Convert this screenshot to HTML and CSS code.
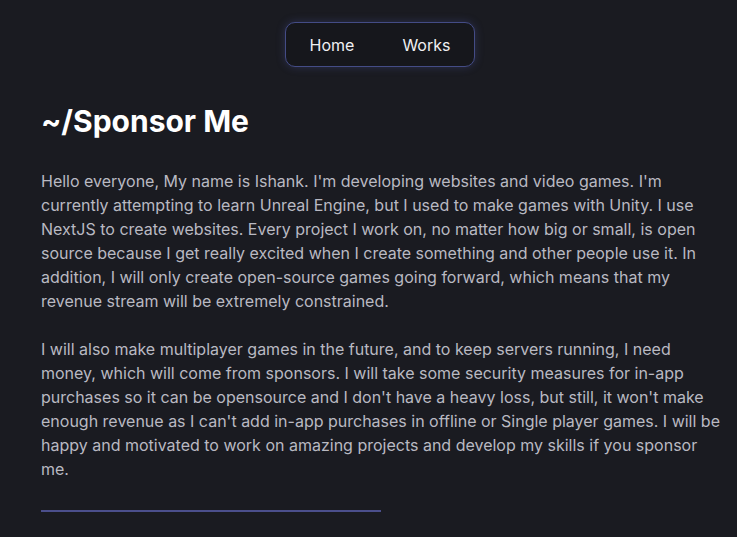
FILE: index.html
```html
<!DOCTYPE html>
<html>
<head>
<meta charset="utf-8">
<link rel="stylesheet" href="styles.css">
</head>
<body>
<header class="top">
  <nav class="nav">
    <a class="nav-link" href="#">Home</a>
    <a class="nav-link" href="#">Works</a>
  </nav>
</header>
<main class="main">
  <h1 class="title">~/Sponsor Me</h1>
  <p class="text">Hello everyone, My name is Ishank. I'm developing websites and video games. I'm currently attempting to learn Unreal Engine, but I used to make games with Unity. I use NextJS to create websites. Every project I work on, no matter how big or small, is open source because I get really excited when I create something and other people use it. In addition, I will only create open-source games going forward, which means that my revenue stream will be extremely constrained.</p>
  <p class="text">I will also make multiplayer games in the future, and to keep servers running, I need money, which will come from sponsors. I will take some security measures for in-app purchases so it can be opensource and I don't have a heavy loss, but still, it won't make enough revenue as I can't add in-app purchases in offline or Single player games. I will be happy and motivated to work on amazing projects and develop my skills if you sponsor me.</p>
  <div class="rule"></div>
</main>
</body>
</html>
```

FILE: styles.css
```css
html, body {
  margin: 0;
  padding: 0;
  background: #1a1b21;
  font-family: Inter, "Noto Sans", sans-serif;
  height: 100%;
  overflow: hidden;
}
.top {
  display: flex;
  justify-content: center;
  padding: 22px 18px 0 41px;
}
.nav {
  display: flex;
  align-items: center;
  gap: 48px;
  height: 43px;
  padding: 0 24px 0 24px;
  border: 1px solid #444c86;
  border-radius: 10px;
  background: #16171c;
  box-shadow: 0 0 8px rgba(80, 90, 170, 0.35);
}
.nav-link {
  color: #f0f0f2;
  text-decoration: none;
  font-size: 16px;
}
.main {
  padding: 0 16px 0 41px;
  width: 680px;
}
.title {
  margin: 36px 0 0;
  font-size: 30px;
  line-height: 36px;
  font-weight: 700;
  color: #ffffff;
}
.text {
  margin: 30px 0 0;
  font-size: 16px;
  line-height: 24px;
  color: #b9b9c2;
}
.text + .text {
  margin-top: 24px;
}
.rule {
  margin-top: 29px;
  width: 340px;
  height: 2px;
  background: #4b4f8c;
}
```
